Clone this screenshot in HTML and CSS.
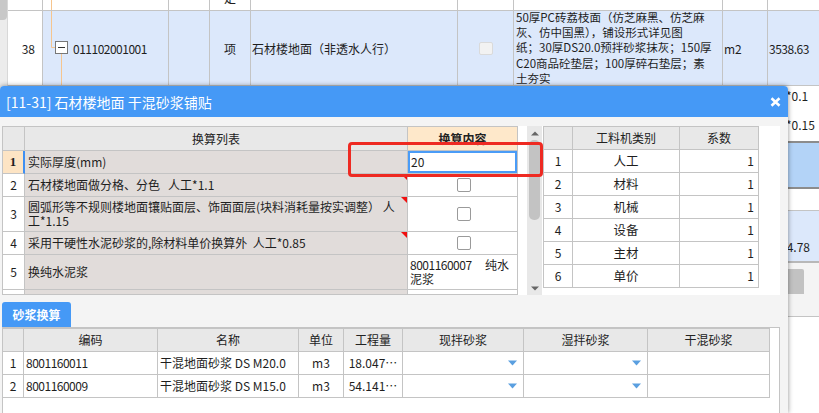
FILE: index.html
```html
<!DOCTYPE html>
<html lang="zh-CN">
<head>
  <meta charset="UTF-8" />
  <meta name="viewport" content="width=device-width, initial-scale=1.0"/>
  <title>标准换算 - 石材楼地面</title>
  <link rel="stylesheet" href="styles.css">
</head>
<body>
  <div class="app">
    <div class="splitter"><div class="thumb"></div></div>

    <!-- 清单（对话框后面） -->
    <div class="sheet">
      <div class="row r0">
        <div class="cell c-seq"></div>
        <div class="cell c-code">
          <svg class="tree" width="26" height="10" viewBox="0 0 26 10"><path d="M8.5 0V10"/></svg>
        </div>
        <div class="cell c-x"></div>
        <div class="cell c-unit"><span class="cut">定</span></div>
        <div class="cell c-name"></div>
        <div class="cell c-chk"></div>
        <div class="cell c-desc"></div>
        <div class="cell c-u2"></div>
        <div class="cell c-qty"></div>
      </div>

      <div class="row r38">
        <div class="cell c-seq seq">38</div>
        <div class="cell c-code">
          <svg class="tree" width="26" height="74" viewBox="0 0 26 74">
            <path d="M8.5 0V36.5H12.5M18.5 42.5V74"/>
            <rect class="node" x="12.5" y="30.5" width="12" height="12"/>
            <path class="minus" d="M15 36.5H22"/>
          </svg>
          <span class="code">011102001001</span>
        </div>
        <div class="cell c-x"></div>
        <div class="cell c-unit center">项</div>
        <div class="cell c-name">石材楼地面（非透水人行）</div>
        <div class="cell c-chk center"><i class="bg-check"></i></div>
        <div class="cell c-desc">
          <div>50厚PC砖荔枝面（仿芝麻黑、仿芝麻<br>灰、仿中国黑），铺设形式详见图<br>纸；30厚DS20.0预拌砂浆抹灰；150厚<br>C20商品砼垫层；100厚碎石垫层；素<br>土夯实</div>
        </div>
        <div class="cell c-u2">m2</div>
        <div class="cell c-qty code">3538.63</div>
      </div>

      <div class="row r-a">
        <div class="cell c-lead"></div>
        <div class="cell c-qty notes">
          <div>工*0.1</div>
          <div>工*0.15</div>
        </div>
      </div>
      <div class="row r-sel">
        <div class="cell c-lead"></div>
        <div class="cell c-qty"></div>
      </div>
      <div class="row r-c">
        <div class="cell c-lead"></div>
        <div class="cell c-qty"></div>
      </div>
      <div class="row r-d">
        <div class="cell c-lead"></div>
        <div class="cell c-qty low">14.78</div>
      </div>

      <div class="hbar"><span class="hbar-tab"></span></div>
      <div class="pane"></div>
    </div>

    <!-- 标准换算对话框 -->
    <div class="dialog">
      <div class="dialog-title">
        <span>[11-31] 石材楼地面 干混砂浆铺贴</span>
        <svg class="close" width="11" height="10" viewBox="0 0 11 10">
          <path d="M1.5 1.3L9.5 8.7M9.5 1.3L1.5 8.7"/>
        </svg>
      </div>

      <div class="dialog-body">
        <div class="top-panel">
          <div class="grid calc">
            <div class="hd"></div>
            <div class="hd">换算列表</div>
            <div class="hd hd-val">换算内容</div>

            <div class="no cur">1</div>
            <div class="txt">实际厚度(mm)</div>
            <div class="val editing">20</div>

            <div class="no">2</div>
            <div class="txt mark">石材楼地面做分格、分色&nbsp;&nbsp;&nbsp;人工*1.1</div>
            <div class="val chk"><i class="box"></i></div>

            <div class="no">3</div>
            <div class="txt mark">圆弧形等不规则楼地面镶贴面层、饰面面层(块料消耗量按实调整）&nbsp;人<br>工*1.15</div>
            <div class="val chk"><i class="box"></i></div>

            <div class="no">4</div>
            <div class="txt mark">采用干硬性水泥砂浆的,除材料单价换算外&nbsp;&nbsp;人工*0.85</div>
            <div class="val chk"><i class="box"></i></div>

            <div class="no">5</div>
            <div class="txt">换纯水泥浆</div>
            <div class="val"><div><span class="code">8001160007</span>&nbsp;&nbsp;&nbsp;&nbsp;&nbsp;纯水<br>泥浆</div></div>

            <div class="no"></div>
            <div class="txt"></div>
            <div class="val top"><div><span class="code">8001160011</span>&nbsp;&nbsp;&nbsp;&nbsp;&nbsp;干混<br>砂浆</div></div>
          </div>

          <div class="vscroll">
            <div class="arrow"><svg width="8" height="5" viewBox="0 0 8 5"><path d="M0 4.5L4 0.5L8 4.5Z"/></svg></div>
            <div class="thumb"></div>
            <div class="track"></div>
            <div class="arrow"><svg width="8" height="5" viewBox="0 0 8 5"><path d="M0 0.5L4 4.5L8 0.5Z"/></svg></div>
          </div>

          <div class="grid coef">
            <div class="hd"></div>
            <div class="hd">工料机类别</div>
            <div class="hd">系数</div>

            <div class="no">1</div><div class="cat">人工</div><div class="num">1</div>
            <div class="no">2</div><div class="cat">材料</div><div class="num">1</div>
            <div class="no">3</div><div class="cat">机械</div><div class="num">1</div>
            <div class="no">4</div><div class="cat">设备</div><div class="num">1</div>
            <div class="no">5</div><div class="cat">主材</div><div class="num">1</div>
            <div class="no">6</div><div class="cat">单价</div><div class="num">1</div>
          </div>

          <div class="highlight"></div>
        </div>

        <div class="tabs"><span class="tab">砂浆换算</span></div>

        <div class="mortar-panel">
          <div class="grid mortar">
            <div class="hd"></div>
            <div class="hd">编码</div>
            <div class="hd">名称</div>
            <div class="hd">单位</div>
            <div class="hd">工程量</div>
            <div class="hd">现拌砂浆</div>
            <div class="hd">湿拌砂浆</div>
            <div class="hd">干混砂浆</div>

            <div class="no">1</div>
            <div class="code">8001160011</div>
            <div class="name">干混地面砂浆 DS M20.0</div>
            <div class="unit">m3</div>
            <div class="qty">18.047…</div>
            <div class="drop"><svg width="9" height="6" viewBox="0 0 9 6"><path d="M0 0.5H9L4.5 5.5Z"/></svg></div>
            <div class="drop"><svg width="9" height="6" viewBox="0 0 9 6"><path d="M0 0.5H9L4.5 5.5Z"/></svg></div>
            <div></div>

            <div class="no">2</div>
            <div class="code">8001160009</div>
            <div class="name">干混地面砂浆 DS M15.0</div>
            <div class="unit">m3</div>
            <div class="qty">54.141…</div>
            <div class="drop"><svg width="9" height="6" viewBox="0 0 9 6"><path d="M0 0.5H9L4.5 5.5Z"/></svg></div>
            <div class="drop"><svg width="9" height="6" viewBox="0 0 9 6"><path d="M0 0.5H9L4.5 5.5Z"/></svg></div>
            <div></div>
          </div>
        </div>
      </div>
    </div>
  </div>
</body>
</html>
```

FILE: styles.css
```css
* {
  box-sizing: border-box;
}

body {
  margin: 0;
  font-family: "Noto Sans CJK SC", "Noto Sans", sans-serif;
  font-size: 12px;
  color: #1e1e1e;
}

.app {
  position: relative;
  width: 819px;
  height: 413px;
  overflow: hidden;
  display: flex;
  background: #fff;
}

.code {
  letter-spacing: -0.5px;
}

/* 左侧滚动条 */
.splitter {
  width: 8px;
  background: #ececec;
  border-right: 1px solid #d8d8d8;
}

.splitter .thumb {
  height: 20px;
  background: #c8c8c8;
  border-radius: 0 0 4px 0;
}

/* 清单 */
.sheet {
  flex: 1;
  display: flex;
  flex-direction: column;
}

.row {
  display: flex;
  border-bottom: 1px solid #c4c4c4;
  flex-shrink: 0;
}

.cell {
  display: flex;
  align-items: center;
  border-right: 1px solid #c4c4c4;
  white-space: nowrap;
  overflow: hidden;
}

.c-seq { width: 35px; }
.c-code { width: 126px; }
.c-x { width: 41px; }
.c-unit { width: 41px; }
.c-name { width: 207px; padding-left: 1px; }
.c-chk { width: 56px; }
.c-desc { width: 209px; padding-left: 2px; font-size: 11.5px; line-height: 15.2px; }
.c-u2 { width: 45px; padding-left: 1px; }
.c-qty { flex: 1; border-right: 0; padding-left: 1px; }
.c-lead { width: 760px; }

.center {
  justify-content: center;
}

.r0 {
  height: 11px;
}

.cut {
  line-height: 12px;
  margin-top: -14px;
  width: 100%;
  text-align: center;
}

.r38 {
  height: 75px;
  background: #dce8fb;
}

.r38 .c-seq {
  background: #fff;
}

.seq {
  justify-content: flex-end;
  padding-right: 7px;
}

.tree {
  flex-shrink: 0;
  margin-right: 4px;
}

.tree path {
  fill: none;
  stroke: #f6c58e;
  stroke-width: 1;
}

.tree .node {
  fill: #fff;
  stroke: #777;
}

.tree .minus {
  stroke: #333;
}

.bg-check {
  width: 14px;
  height: 13px;
  background: #f2f2f2;
  border: 1px solid #dadada;
  border-radius: 2px;
}

.r-a {
  height: 55px;
  border-bottom: 0;
}

.notes {
  flex-direction: column;
  align-items: flex-start;
  justify-content: flex-start;
  padding: 3px 0 0 6px;
  line-height: 14px;
}

.notes div + div {
  margin-top: 15px;
}

.r-sel {
  height: 48px;
  background: #b3d3f7;
  border-top: 2px solid #8c8c8c;
  border-bottom: 2px solid #8c8c8c;
}

.r-c {
  height: 22px;
}

.r-d {
  height: 52px;
  background: #dce8fb;
  border-bottom: 2px solid #b8b8b8;
}

.low {
  align-items: flex-end;
  justify-content: flex-end;
  padding: 0 9px 6px 0;
}

.hbar {
  height: 54px;
  flex-shrink: 0;
  background: #f4f4f4;
  border-bottom: 1px solid #c4c4c4;
  padding-top: 6px;
}

.hbar-tab {
  display: block;
  width: 84px;
  height: 25px;
  margin-left: 712px;
  background: #c2c2c2;
  border-radius: 2px 2px 0 0;
}

.pane {
  flex: 1;
  background: #fff;
}

/* 对话框 */
.dialog {
  position: absolute;
  left: 0;
  top: 86px;
  width: 788px;
  height: 327px;
  background: #f4f4f4;
  border-radius: 4px 4px 0 0;
  box-shadow: 0 0 5px rgba(0, 0, 0, 0.45);
}

.dialog-title {
  height: 31px;
  background: #4599f6;
  color: #fff;
  font-size: 14px;
  display: flex;
  align-items: center;
  justify-content: space-between;
  padding: 0 7px 0 6px;
  border-radius: 4px 4px 0 0;
}

.close path {
  fill: none;
  stroke: #fff;
  stroke-width: 2.6;
}

.dialog-body {
  padding: 9px 8px 0 2px;
}

.top-panel {
  position: relative;
  display: flex;
  align-items: flex-start;
  height: 169px;
  background: #fff;
}

.grid {
  display: grid;
  border-top: 1px solid #c4c4c4;
  border-left: 1px solid #c4c4c4;
}

.grid > div {
  display: flex;
  align-items: center;
  border-right: 1px solid #c4c4c4;
  border-bottom: 1px solid #c4c4c4;
  white-space: nowrap;
  overflow: hidden;
  line-height: 14px;
}

.grid .hd {
  background: #e8e8e8;
  justify-content: center;
  color: #222;
}

.grid .no {
  justify-content: center;
  background: #fff;
}

/* 换算列表 */
.calc {
  width: 516px;
  height: 169px;
  overflow: hidden;
  border-bottom: 1px solid #c4c4c4;
  grid-template-columns: 22px 383px 110px;
  grid-template-rows: 24px 23px 23px 35px 23px 35px 23px;
}

.calc .hd-val {
  background: #fee8ca;
  font-weight: bold;
}

.calc .no.cur {
  background: #fde4c4;
  border-right: 2px solid #3f8ff2;
  font-family: "Liberation Serif", serif;
  font-weight: bold;
  font-size: 13px;
}

.calc .txt {
  position: relative;
  background: #e1dcda;
  padding-left: 3px;
}

.calc .mark::after {
  content: "";
  position: absolute;
  top: 0;
  right: 0;
  border-top: 6px solid #f01010;
  border-left: 6px solid transparent;
}

.calc .val {
  padding-left: 2px;
}

.calc .val.top {
  align-items: flex-start;
  padding-top: 3px;
}

.calc .editing {
  box-shadow: inset 0 0 0 2px #4a9cf7;
  padding-left: 3px;
}

.calc .chk {
  justify-content: center;
}

.box {
  width: 14px;
  height: 14px;
  border: 1px solid #9a9a9a;
  border-radius: 2px;
  background: #fff;
}

.vscroll {
  width: 15px;
  height: 169px;
  margin: 0 1px 0 9px;
  background: #e8e8e8;
  display: flex;
  flex-direction: column;
  align-items: center;
}

.vscroll .arrow {
  height: 14px;
  display: flex;
  align-items: center;
  justify-content: center;
}

.vscroll .arrow path {
  fill: #666;
}

.vscroll .thumb {
  width: 11px;
  height: 80px;
  background: #c3c3c3;
  border-radius: 5px;
}

.vscroll .track {
  flex: 1;
}

/* 工料机系数 */
.coef {
  width: 216px;
  grid-template-columns: 29px 107px 79px;
  grid-template-rows: repeat(7, 23px);
}

.coef .cat {
  justify-content: center;
  font-size: 12.5px;
}

.coef .num {
  justify-content: flex-end;
  padding-right: 4px;
}

.highlight {
  position: absolute;
  left: 346px;
  top: 16px;
  width: 195px;
  height: 35px;
  border: 3px solid #ee2a22;
  border-radius: 4px;
}

/* 砂浆换算 */
.tabs {
  display: flex;
  margin-top: 7px;
  height: 25px;
}

.tab {
  width: 69px;
  display: flex;
  align-items: center;
  justify-content: center;
  background: #4599f6;
  color: #fff;
  font-weight: bold;
  border-radius: 3px 3px 0 0;
}

.mortar-panel {
  width: 778px;
  height: 90px;
  background: #fff;
  border: 1px solid #c4c4c4;
}

.mortar {
  width: 767px;
  border-left: 0;
  grid-template-columns: 21px 134px 141px 45px 59px 121px 124px 122px;
  grid-template-rows: 23px 23px 23px;
}

.mortar .code,
.mortar .name {
  padding-left: 2px;
}

.mortar .unit,
.mortar .qty {
  justify-content: center;
}

.mortar .drop {
  justify-content: flex-end;
  padding-right: 6px;
}

.mortar .drop path {
  fill: #5a9fe0;
}
```
